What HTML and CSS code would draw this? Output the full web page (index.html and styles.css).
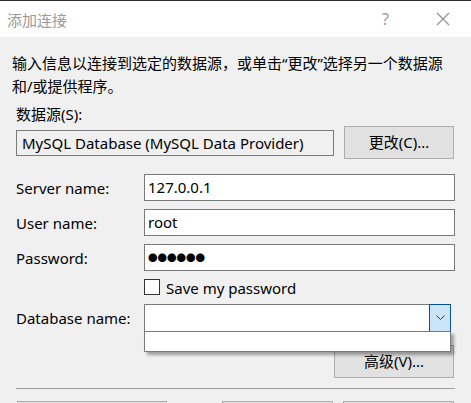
FILE: index.html
```html
<!DOCTYPE html>
<html lang="zh-CN">
<head>
<meta charset="UTF-8">
<meta name="viewport" content="width=device-width, initial-scale=1.0">
<title>添加连接</title>
<link rel="stylesheet" href="styles.css">
</head>
<body>
<div class="dialog">
    <div class="title-bar">
        <span class="title">添加连接</span>
        <span class="help">?</span>
        <svg class="close" width="14" height="14" viewBox="0 0 14 14">
            <path d="M1 1 L13 13 M13 1 L1 13" stroke="#8c8c8c" stroke-width="1.1" fill="none"/>
        </svg>
    </div>

    <div class="content">
        <p class="intro">输入信息以连接到选定的数据源，或单击“更改”选择另一个数据源和/或提供程序。</p>

        <div class="source-label">数据源(S):</div>
        <div class="source-row">
            <div class="source-box">MySQL Database (MySQL Data Provider)</div>
            <div class="btn btn-change">更改(C)...</div>
        </div>

        <div class="form">
            <label>Server name:</label>
            <div class="field">127.0.0.1</div>

            <label>User name:</label>
            <div class="field">root</div>

            <label>Password:</label>
            <div class="field dots">●●●●●●</div>

            <span></span>
            <div class="check-row">
                <span class="checkbox"></span>
                <span>Save my password</span>
            </div>

            <label>Database name:</label>
            <div class="combo">
                <div class="combo-arrow">
                    <svg width="9" height="6" viewBox="0 0 9 6">
                        <polyline points="0.5,0.5 4.5,4.5 8.5,0.5" stroke="#3c3c3c" stroke-width="1" fill="none"/>
                    </svg>
                </div>
                <div class="combo-list"></div>
            </div>
        </div>

        <div class="advanced-row">
            <div class="btn btn-advanced">高级(V)...</div>
        </div>

        <div class="separator"></div>

        <!-- only the top edges of the footer buttons are in view -->
        <div class="footer">
            <div class="btn btn-test"></div>
            <div class="btn btn-ok"></div>
            <div class="btn btn-cancel"></div>
        </div>
    </div>
</div>
</body>
</html>
```

FILE: styles.css
```css
body, html {
    margin: 0;
    padding: 0;
    height: 100%;
    overflow: hidden;
}

body {
    background: #f0f0f0;
    font-family: "Noto Sans", "Noto Sans CJK SC", sans-serif;
    font-size: 15px;
    color: #000;
}

.dialog {
    width: 471px;
    height: 403px;
    overflow: hidden;
    border-top: 1px solid #2b2b2b;
}

.title-bar {
    height: 36px;
    background: #fff;
    display: flex;
    align-items: center;
}

.title {
    flex: 1;
    padding-left: 7px;
    color: #9a9a9a;
    font-size: 15px;
}

.help {
    color: #9a9a9a;
    font-size: 16px;
    margin-right: 47px;
}

.close {
    margin-right: 21px;
}

.content {
    padding: 15px 16px 0 16px;
}

.intro {
    margin: 0 0 5px -4px;
    line-height: 23px;
}

.source-label {
    line-height: 23px;
    margin-top: 1px;
}

.source-row {
    display: flex;
    align-items: center;
}

.source-box {
    width: 311px;
    height: 24px;
    line-height: 24px;
    padding-left: 5px;
    border: 1px solid #7a7a7a;
    white-space: nowrap;
}

.btn {
    box-sizing: border-box;
    height: 33px;
    line-height: 31px;
    text-align: center;
    background: #e1e1e1;
    border: 1px solid #adadad;
}

.btn-change {
    width: 110px;
    margin-left: 10px;
}

.form {
    display: grid;
    grid-template-columns: 128px 311px;
    row-gap: 8px;
    align-items: center;
    margin-top: 15px;
}

.field {
    box-sizing: border-box;
    height: 27px;
    line-height: 25px;
    padding-left: 3px;
    background: #fff;
    border: 1px solid #7a7a7a;
}

.dots {
    font-size: 9.5px;
    letter-spacing: 0;
}

.check-row {
    display: flex;
    align-items: center;
    height: 17px;
}

.checkbox {
    box-sizing: border-box;
    width: 16px;
    height: 16px;
    background: #fff;
    border: 1px solid #333;
    margin: 0 6px 0 0;
    position: relative;
    top: -1px;
}

.combo {
    position: relative;
    box-sizing: border-box;
    width: 307px;
    height: 28px;
    background: #fff;
    border: 1px solid #7a7a7a;
    display: flex;
    justify-content: flex-end;
}

.combo-arrow {
    box-sizing: border-box;
    width: 22px;
    margin: -1px -1px -1px 0;
    background: #cce4f7;
    border: 1px solid #005499;
    display: flex;
    align-items: center;
    justify-content: center;
}

.combo-list {
    position: absolute;
    top: 100%;
    left: -1px;
    right: -1px;
    height: 21px;
    box-sizing: border-box;
    background: #fff;
    border: 1px solid #7a7a7a;
    box-shadow: 3px 3px 3px rgba(0, 0, 0, 0.35);
    z-index: 2;
}

.advanced-row {
    display: flex;
    justify-content: flex-end;
    margin-top: 13px;
    padding-right: 1px;
}

.btn-advanced {
    width: 120px;
}

.separator {
    height: 1px;
    background: #a0a0a0;
    margin-top: 10px;
}

.footer {
    display: flex;
    margin-top: 12px;
}

.btn-test {
    width: 150px;
    margin-left: 1px;
}

.btn-ok {
    width: 111px;
    margin-left: 55px;
}

.btn-cancel {
    width: 111px;
    margin-left: 10px;
}
```
